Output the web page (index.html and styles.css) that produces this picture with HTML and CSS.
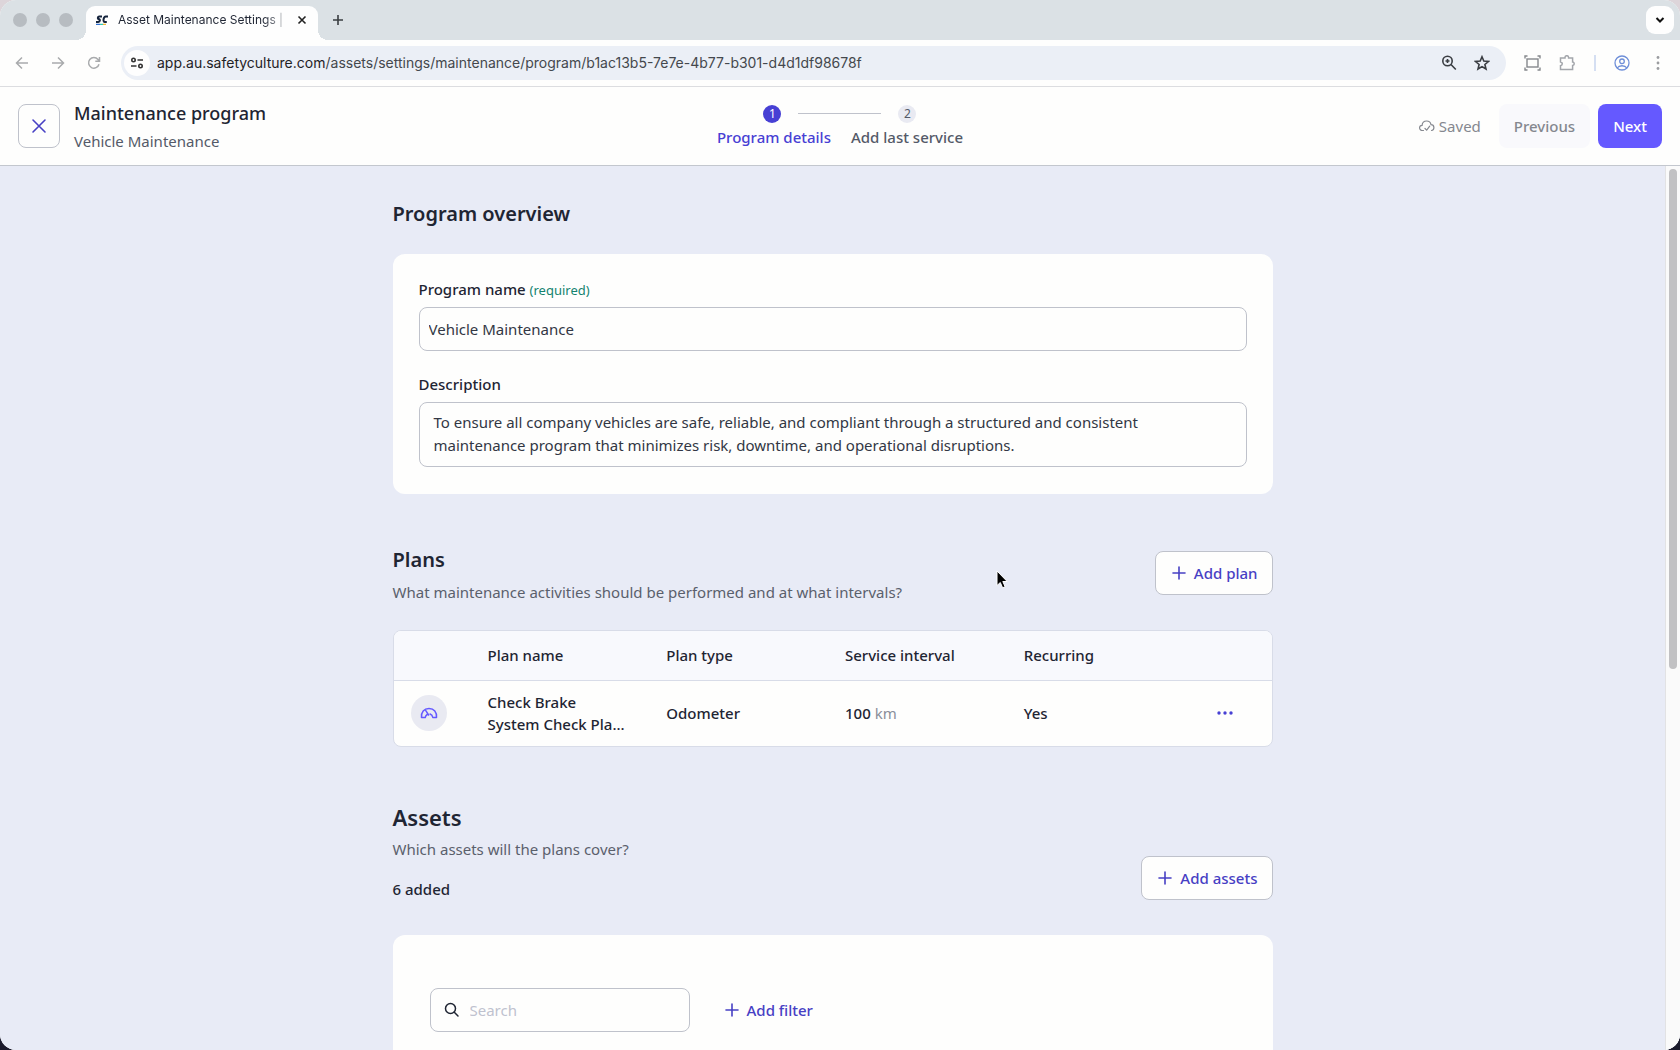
FILE: index.html
```html
<!DOCTYPE html>
<html lang="en">
<head>
    <meta charset="UTF-8">
    <meta name="viewport" content="width=device-width, initial-scale=1.0">
    <title>Asset Maintenance Settings | SafetyCulture</title>
    <link rel="stylesheet" href="styles.css">
</head>
<body>
    <div class="window">
        <!-- Browser tabs -->
        <div class="tab-bar">
            <div class="window-dots">
                <span></span><span></span><span></span>
            </div>
            <div class="tab">
                <svg class="favicon" viewBox="0 0 14 12" width="14" height="12">
                    <path d="M7 2.500H4.200C2.600 2.500 2.400 5 3.800 5c1.600 0 1.400 3-.4 3H1M13 2.500h-2.200C8.400 2.500 7.600 8 9.800 8h2" fill="none" stroke="#16243c" stroke-width="2"/>
                    <path d="M1 10.400h4" stroke="#2f6fd0" stroke-width="1.400"/>
                    <path d="M5 10.400h3" stroke="#35c6b4" stroke-width="1.400"/>
                    <path d="M8 10.400h3" stroke="#f2b632" stroke-width="1.400"/>
                </svg>
                <span class="tab-title">Asset Maintenance Settings |</span>
                <button class="tab-close" aria-label="Close tab">
                    <svg viewBox="0 0 10 10" width="10" height="10"><path d="M1.500 1.500l7 7M8.500 1.500l-7 7" stroke="#222" stroke-width="1.600"/></svg>
                </button>
            </div>
            <button class="tab-new" aria-label="New tab">
                <svg viewBox="0 0 12 12" width="12" height="12"><path d="M6 1v10M1 6h10" stroke="#3a3e42" stroke-width="1.600"/></svg>
            </button>
            <button class="tab-search" aria-label="Search tabs">
                <svg viewBox="0 0 10 10" width="10" height="10"><path d="M1.500 3l3.500 3.500L8.500 3" fill="none" stroke="#111" stroke-width="2"/></svg>
            </button>
        </div>

        <!-- Browser toolbar -->
        <div class="browser-bar">
            <div class="nav-buttons">
                <button aria-label="Back">
                    <svg viewBox="0 0 14 14" width="14" height="14"><path d="M13 7H2M7 1.500L1.500 7 7 12.500" fill="none" stroke="#a9abad" stroke-width="1.500"/></svg>
                </button>
                <button aria-label="Forward">
                    <svg viewBox="0 0 14 14" width="14" height="14"><path d="M1 7h11M7 1.500L12.500 7 7 12.500" fill="none" stroke="#a9abad" stroke-width="1.500"/></svg>
                </button>
                <button aria-label="Reload">
                    <svg viewBox="0 0 14 14" width="14" height="14"><path d="M12 8.200A5.300 5.300 0 1 1 11 3.500l1.500 1.800M12.500 1v4.300H8.300" fill="none" stroke="#a9abad" stroke-width="1.500"/></svg>
                </button>
            </div>
            <div class="address">
                <button class="site-info" aria-label="Site information">
                    <svg viewBox="0 0 14 12" width="14" height="12" fill="none" stroke="#333" stroke-width="1.600"><circle cx="3.500" cy="3" r="1.700"/><path d="M7.500 3H13M1 9h5.500"/><circle cx="10.500" cy="9" r="1.700"/></svg>
                </button>
                <div class="url"><span>app.au.safetyculture.com</span>/assets/settings/maintenance/program/b1ac13b5-7e7e-4b77-b301-d4d1df98678f</div>
                <button aria-label="Zoom">
                    <svg viewBox="0 0 16 16" width="16" height="16" fill="none" stroke="#3a3d42" stroke-width="1.600"><circle cx="6.500" cy="6" r="4.700"/><path d="M10 9.500l4.800 5M6.500 4v4M4.500 6h4"/></svg>
                </button>
                <button aria-label="Bookmark">
                    <svg viewBox="0 0 16 16" width="16" height="16"><path d="M8 1.800l1.800 4.300 4.600.4-3.500 3 1.100 4.500L8 11.600 4 14l1.100-4.500-3.500-3 4.600-.4z" fill="none" stroke="#3a3d42" stroke-width="1.600"/></svg>
                </button>
            </div>
            <div class="browser-actions">
                <button aria-label="Capture">
                    <svg viewBox="0 0 17 16" width="17" height="16" fill="none" stroke="#85888c" stroke-width="1.400"><rect x="3" y="4" width="11" height="8"/><path d="M1 3.500V1h2.500M13.500 1H16v2.500M16 12.500V15h-2.500M3.500 15H1v-2.500"/></svg>
                </button>
                <button aria-label="Extensions">
                    <svg viewBox="0 0 17 16" width="17" height="16"><path d="M1.500 3H6V2.500a1.800 1.800 0 0 1 3.600 0V3h4v4h.4a1.800 1.800 0 0 1 0 3.400h-.4v4.100H1.500v-3.800c2.400-.4 2.400-3.400 0-3.800z" fill="none" stroke="#a3a6ab" stroke-width="1.500"/></svg>
                </button>
                <span class="divider"></span>
                <button aria-label="Profile">
                    <svg viewBox="0 0 16 16" width="16" height="16" fill="none" stroke="#6f8fd8" stroke-width="1.300"><circle cx="8" cy="8" r="7"/><circle cx="8" cy="6.300" r="2.300"/><path d="M3.200 13c1.800-3 7.800-3 9.600 0"/></svg>
                </button>
                <button aria-label="Menu">
                    <svg viewBox="0 0 4 16" width="4" height="16" fill="#9b9da0"><circle cx="2" cy="2.500" r="1.400"/><circle cx="2" cy="8" r="1.400"/><circle cx="2" cy="13.500" r="1.400"/></svg>
                </button>
            </div>
        </div>

        <!-- App header -->
        <header class="header">
            <div class="header-left">
                <button class="btn btn-close" aria-label="Close">
                    <svg viewBox="0 0 16 16" width="16" height="16"><path d="M2 2l12 12M14 2L2 14" stroke="#4740c4" stroke-width="1.600" stroke-linecap="round"/></svg>
                </button>
                <div class="header-title">
                    <h1>Maintenance program</h1>
                    <p>Vehicle Maintenance</p>
                </div>
            </div>
            <div class="steps">
                <div class="step-markers">
                    <span class="marker active">1</span>
                    <span class="step-line"></span>
                    <span class="marker">2</span>
                </div>
                <div class="step-labels">
                    <span class="active">Program details</span>
                    <span>Add last service</span>
                </div>
            </div>
            <div class="header-right">
                <span class="saved">
                    <svg viewBox="0 0 16 14" width="16" height="14" fill="none" stroke="#85888f" stroke-width="1.200" stroke-linecap="round"><path d="M4.500 11.500H3.300a2.600 2.600 0 0 1-.2-5.200C3.300 3.500 5.200 2 7.600 2c2.300 0 4 1.500 4.400 3.700 3.600 0 3.900 5.200.500 5.800M6 9.500l1.700 1.700 3-4"/></svg>
                    Saved
                </span>
                <button class="btn btn-previous" disabled>Previous</button>
                <button class="btn btn-next">Next</button>
            </div>
        </header>

        <div class="scroll-area">
            <main class="content">
                <section class="overview">
                    <h2>Program overview</h2>
                    <div class="card form">
                        <label for="programName">Program name <small>(required)</small></label>
                        <input type="text" id="programName" value="Vehicle Maintenance">
                        <label for="description">Description</label>
                        <textarea id="description" rows="2">To ensure all company vehicles are safe, reliable, and compliant through a structured and consistent
maintenance program that minimizes risk, downtime, and operational disruptions.</textarea>
                    </div>
                </section>

                <section class="plans">
                    <div class="section-head">
                        <div>
                            <h2>Plans</h2>
                            <p>What maintenance activities should be performed and at what intervals?</p>
                        </div>
                        <button class="btn btn-add">
                            <svg viewBox="0 0 14 14" width="14" height="14"><path d="M7 1v12M1 7h12" stroke="currentColor" stroke-width="1.600" stroke-linecap="round"/></svg>
                            Add plan
                        </button>
                    </div>
                    <div class="table-wrap">
                        <table>
                            <thead>
                                <tr>
                                    <th class="col-icon"></th>
                                    <th>Plan name</th>
                                    <th>Plan type</th>
                                    <th>Service interval</th>
                                    <th>Recurring</th>
                                    <th class="col-menu"></th>
                                </tr>
                            </thead>
                            <tbody>
                                <tr>
                                    <td class="col-icon">
                                        <span class="plan-icon">
                                            <svg viewBox="0 0 18 14" width="18" height="14" fill="none" stroke="#6559ff" stroke-width="1.500" stroke-linejoin="round" stroke-linecap="round"><path d="M1.500 11.500C1 6 4 2.500 9 2.500s8 3.500 7.500 9h-3.700c-.3-1.800-1.300-3-2.700-3.500M7.200 8.500c-1 .6-1.700 1.600-2 3H1.500M8.600 9L5.800 4.600"/></svg>
                                        </span>
                                    </td>
                                    <td>Check Brake<br>System Check Pla...</td>
                                    <td>Odometer</td>
                                    <td>100 <span class="unit">km</span></td>
                                    <td>Yes</td>
                                    <td class="col-menu">
                                        <button class="more" aria-label="Plan options">
                                            <svg viewBox="0 0 16 4" width="16" height="4" fill="#4740d4"><circle cx="2" cy="2" r="1.700"/><circle cx="8" cy="2" r="1.700"/><circle cx="14" cy="2" r="1.700"/></svg>
                                        </button>
                                    </td>
                                </tr>
                            </tbody>
                        </table>
                    </div>
                </section>

                <section class="assets">
                    <div class="section-head">
                        <div>
                            <h2>Assets</h2>
                            <p>Which assets will the plans cover?</p>
                            <p class="count">6 added</p>
                        </div>
                        <button class="btn btn-add">
                            <svg viewBox="0 0 14 14" width="14" height="14"><path d="M7 1v12M1 7h12" stroke="currentColor" stroke-width="1.600" stroke-linecap="round"/></svg>
                            Add assets
                        </button>
                    </div>
                    <div class="card asset-list">
                        <label class="search">
                            <svg viewBox="0 0 16 16" width="16" height="16" fill="none" stroke="#1f2533" stroke-width="1.500" stroke-linecap="round"><circle cx="6.500" cy="6.500" r="5"/><path d="M10.300 10.300L14 14"/></svg>
                            <input type="text" placeholder="Search" aria-label="Search assets">
                        </label>
                        <button class="btn-filter">
                            <svg viewBox="0 0 14 14" width="14" height="14"><path d="M7 1v12M1 7h12" stroke="currentColor" stroke-width="1.600" stroke-linecap="round"/></svg>
                            Add filter
                        </button>
                    </div>
                </section>
            </main>
            <div class="scroll-track">
                <div class="scroll-thumb"></div>
            </div>
        </div>
    </div>

    <svg class="cursor" viewBox="0 0 14 20" width="14" height="20"><path d="M1 1v14.500l3.300-3 2.300 5.300 2.500-1.100-2.300-5.200h4.400z" fill="#000" stroke="#fff" stroke-width="1"/></svg>
</body>
</html>
```
FILE: styles.css
```css
* {
    margin: 0;
    padding: 0;
    box-sizing: border-box;
}

body {
    height: 100vh;
    overflow: hidden;
    position: relative;
    font-family: "Noto Sans", sans-serif;
    font-size: 15px;
    line-height: 22px;
    color: #1f2533;
    background: linear-gradient(#ddd5da 50%, #1b1b2c 50%);
}

button {
    border: none;
    background: none;
    font: inherit;
    color: inherit;
    cursor: pointer;
}

svg {
    display: block;
    flex: none;
}

.window {
    height: 100vh;
    display: flex;
    flex-direction: column;
    border-radius: 16px;
    overflow: hidden;
    background: #fefefd;
}

/* Browser tabs */
.tab-bar {
    display: flex;
    align-items: center;
    height: 40px;
    flex: none;
    padding: 0 6px 0 13px;
    background: #dbe1e5;
    font-family: Inter, sans-serif;
    font-size: 12px;
}

.window-dots {
    display: flex;
    gap: 9px;
    margin-right: 13px;
}

.window-dots span {
    width: 14px;
    height: 14px;
    border-radius: 50%;
    background: #b7bcc1;
}

.tab {
    position: relative;
    display: flex;
    align-items: center;
    align-self: flex-end;
    width: 232px;
    height: 34px;
    padding: 0 11px 6px 9px;
    border-radius: 9px 9px 0 0;
    background: #fefefe;
}

/* Curved feet of the active tab */
.tab::before,
.tab::after {
    content: "";
    position: absolute;
    bottom: 0;
    width: 10px;
    height: 10px;
}

.tab::before {
    left: -10px;
    background: radial-gradient(circle at 0 0, transparent 10px, #fefefe 10px);
}

.tab::after {
    right: -10px;
    background: radial-gradient(circle at 100% 0, transparent 10px, #fefefe 10px);
}

.tab-title {
    margin-left: 9px;
    white-space: nowrap;
    mask-image: linear-gradient(to right, #000 88%, rgba(0, 0, 0, 0.3));
}

.tab-close {
    margin-left: auto;
}

.tab-new {
    margin-left: 14px;
}

.tab-search {
    display: flex;
    align-items: center;
    justify-content: center;
    width: 28px;
    height: 28px;
    margin-left: auto;
    border-radius: 9px;
    background: #fefefe;
}

/* Browser toolbar */
.browser-bar {
    display: flex;
    align-items: center;
    height: 47px;
    flex: none;
    padding: 0 20px 0 15px;
    border-bottom: 1px solid #dcdde0;
}

.nav-buttons {
    display: flex;
    gap: 22px;
    margin-right: 20px;
}

.address {
    display: flex;
    align-items: center;
    flex: 1;
    gap: 17px;
    height: 34px;
    padding: 0 16px 0 3px;
    border-radius: 17px;
    background: #ebeff6;
    font-family: Inter, sans-serif;
    font-size: 14px;
    color: #44484d;
}

.site-info {
    display: flex;
    align-items: center;
    justify-content: center;
    width: 26px;
    height: 26px;
    border-radius: 50%;
    background: #fefefe;
}

.url {
    flex: 1;
    margin-left: -10px;
}

.url span {
    color: #1f2225;
}

.browser-actions {
    display: flex;
    align-items: center;
    gap: 18px;
    margin-left: 18px;
}

.divider {
    width: 2px;
    height: 16px;
    background: #d5dff2;
}

.browser-actions button:last-child {
    margin-left: 8px;
}

/* App header */
.header {
    display: grid;
    grid-template-columns: 1fr auto 1fr;
    align-items: center;
    height: 79px;
    flex: none;
    padding: 0 18px;
    border-bottom: 1px solid #c3c7ce;
}

.header-left {
    display: flex;
    align-items: center;
    gap: 14px;
}

.header-title {
    padding-top: 2px;
    line-height: 28px;
}

.header h1 {
    font-size: 18px;
    font-weight: 500;
}

.header p {
    color: #545a68;
}

.btn {
    display: flex;
    align-items: center;
    justify-content: center;
    height: 44px;
    border-radius: 8px;
    font-weight: 500;
}

.btn-close {
    width: 42px;
    border: 1px solid #bfc2cb;
}

.steps {
    display: flex;
    flex-direction: column;
    align-items: center;
    gap: 3px;
}

.step-markers {
    display: flex;
    align-items: center;
    gap: 17px;
}

.marker {
    width: 18px;
    height: 18px;
    border-radius: 50%;
    background: #e9eaf2;
    font-size: 12px;
    line-height: 18px;
    text-align: center;
    color: #545a68;
}

.marker.active {
    background: #4740d4;
    color: #fff;
}

.step-line {
    width: 83px;
    height: 1px;
    background: #bfc2cb;
}

.step-labels {
    display: flex;
    gap: 20px;
    font-weight: 500;
    color: #545a68;
}

.step-labels .active {
    color: #4740d4;
}

.header-right {
    display: flex;
    align-items: center;
    justify-content: flex-end;
    gap: 8px;
}

.saved {
    display: flex;
    align-items: center;
    gap: 4px;
    margin-right: 10px;
    color: #85888f;
}

.btn-previous {
    padding: 0 15px;
    background: #f9f9fc;
    color: #85888f;
}

.btn-next {
    padding: 0 15px;
    background: #6559ff;
    color: #fff;
}

/* Page content */
.scroll-area {
    display: flex;
    flex: 1;
    min-height: 0;
    background: #e8ebf6;
}

.content {
    flex: 1;
    overflow: hidden;
    padding: 34px 24px 0;
}

.content section {
    max-width: 880px;
    margin: 0 auto 52px;
}

h2 {
    font-size: 20px;
    line-height: 28px;
    font-weight: 600;
}

.card {
    border-radius: 12px;
    background: #fefefd;
}

.form {
    display: flex;
    flex-direction: column;
    margin-top: 26px;
    padding: 24px 26px 27px;
}

.form label {
    margin-bottom: 7px;
    font-weight: 500;
}

.form small {
    font-size: 13px;
    line-height: 18px;
    font-weight: 400;
    color: #14836f;
}

.form input,
.form textarea {
    width: 100%;
    border: 1px solid #bfc2cb;
    border-radius: 8px;
    background: #fefefd;
    font: inherit;
    color: #323744;
}

.form input {
    height: 44px;
    margin-bottom: 22px;
    padding: 0 9px;
}

.form textarea {
    height: 65px;
    padding: 8px 14px;
    line-height: 23px;
    resize: none;
    overflow: hidden;
}

.section-head {
    display: flex;
    justify-content: space-between;
}

.section-head p {
    margin-top: 7px;
    color: #5a606c;
}

.btn-add {
    gap: 8px;
    padding: 0 14px 0 16px;
    border: 1px solid #bfc2cb;
    background: #fefefd;
    color: #4740c4;
}

/* Plans table */
.plans .section-head {
    margin-bottom: 27px;
}

.plans .btn-add {
    margin-top: 5px;
}

.content .plans {
    margin-bottom: 56px;
}

.table-wrap {
    border: 1px solid #d8dce8;
    border-radius: 8px;
    background: #fefefd;
    overflow: hidden;
}

table {
    width: 100%;
    table-layout: fixed;
    border-collapse: collapse;
}

th,
td {
    padding: 0 16px 0 0;
    text-align: left;
    font-weight: 500;
    white-space: nowrap;
}

th {
    height: 49px;
    background: #f8f9fd;
    border-bottom: 1px solid #d8dce8;
}

td {
    height: 66px;
}

.col-icon {
    width: 94px;
    padding-left: 17px;
}

.col-menu {
    width: 69px;
    padding-left: 14px;
}

.plan-icon {
    display: flex;
    align-items: center;
    justify-content: center;
    width: 36px;
    height: 36px;
    border-radius: 50%;
    background: #e9eaf2;
}

.unit {
    font-weight: 400;
    color: #8a8e9a;
}

.more {
    display: block;
    padding: 10px 0;
}

/* Assets */
.assets h2 {
    font-size: 22px;
}

.assets .section-head {
    align-items: flex-end;
    margin-bottom: 35px;
}

.section-head .count {
    margin-top: 18px;
    font-weight: 500;
    color: #1f2533;
}

.asset-list {
    display: flex;
    align-items: flex-start;
    gap: 35px;
    min-height: 400px;
    padding: 53px 37px;
}

.search {
    display: flex;
    align-items: center;
    gap: 10px;
    width: 260px;
    height: 44px;
    padding: 0 13px;
    border: 1px solid #bfc2cb;
    border-radius: 8px;
}

.search input {
    width: 100%;
    border: none;
    outline: none;
    background: none;
    font: inherit;
}

.search input::placeholder {
    color: #bfc2cf;
}

.btn-filter {
    display: flex;
    align-items: center;
    gap: 8px;
    height: 44px;
    font-weight: 500;
    color: #4740c4;
}

/* Scrollbar */
.scroll-track {
    width: 15px;
    padding: 3px;
    border-left: 1px solid #e2e2e4;
    background: #fafafa;
}

.scroll-thumb {
    width: 8px;
    height: 57%;
    border-radius: 4px;
    background: #c1c1c3;
}

.cursor {
    position: absolute;
    top: 570px;
    left: 996px;
}
```
